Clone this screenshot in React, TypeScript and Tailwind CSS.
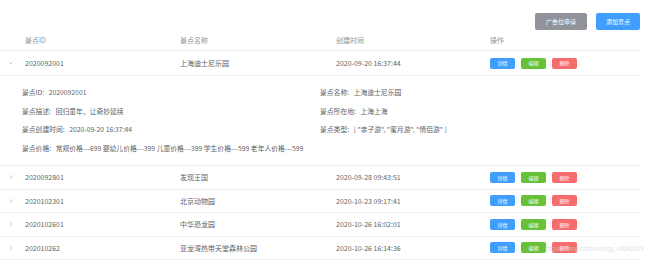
import React from "react";

const rows = [
  { id: "2020092801", name: "发现王国", time: "2020-09-28 09:43:51" },
  { id: "2020102301", name: "北京动物园", time: "2020-10-23 09:17:41" },
  { id: "2020102601", name: "中华恐龙园", time: "2020-10-26 16:02:01" },
  { id: "202010262", name: "亚龙湾热带天堂森林公园", time: "2020-10-26 16:14:36" },
];

function Ops() {
  return (
    <div className="flex items-center gap-[6px]">
      <span className="w-[25px] h-[11px] rounded-[2px] bg-[#409EFF] text-white text-[5px] flex items-center justify-center">详情</span>
      <span className="w-[25px] h-[11px] rounded-[2px] bg-[#67C23A] text-white text-[5px] flex items-center justify-center">编辑</span>
      <span className="w-[25px] h-[11px] rounded-[2px] bg-[#F56C6C] text-white text-[5px] flex items-center justify-center">删除</span>
    </div>
  );
}

function Chevron({ open }: { open?: boolean }) {
  return (
    <svg width="6" height="6" viewBox="0 0 10 10" className="ml-[8px]">
      {open ? (
        <path d="M2 3.5 L5 6.5 L8 3.5" fill="none" stroke="#b0b3b8" strokeWidth="1.2" />
      ) : (
        <path d="M3.5 2 L6.5 5 L3.5 8" fill="none" stroke="#b0b3b8" strokeWidth="1.2" />
      )}
    </svg>
  );
}

const cols = "grid grid-cols-[25px_155px_156px_154px_1fr] items-center";

export default function App() {
  return (
    <div
      className="w-[650px] h-[261px] bg-white relative overflow-hidden text-[#606266]"
      style={{ fontFamily: '"Noto Sans CJK SC", "Noto Sans", sans-serif' }}
    >
      <div className="flex justify-end gap-[9px] pr-[10px] pt-[13px]">
        <span className="w-[52px] h-[17px] rounded-[2px] bg-[#909399] text-white text-[6px] flex items-center justify-center">广告位申请</span>
        <span className="w-[44px] h-[17px] rounded-[2px] bg-[#409EFF] text-white text-[6px] flex items-center justify-center">添加景点</span>
      </div>
      <div className="w-[640px] text-[7px]">
        <div className={`${cols} h-[21px] border-b border-[#EBEEF5] text-[#909399]`}>
          <div />
          <div>景点ID</div>
          <div>景点名称</div>
          <div>创建时间</div>
          <div>操作</div>
        </div>
        <div className={`${cols} h-[25px] border-b border-[#EBEEF5]`}>
          <div className="flex items-center"><Chevron open /></div>
          <div>2020092001</div>
          <div>上海迪士尼乐园</div>
          <div>2020-09-20 16:37:44</div>
          <Ops />
        </div>
        <div className="h-[90px] border-b border-[#EBEEF5] pl-[22px] pt-[11px] grid grid-cols-[298px_1fr] gap-y-[8.5px] content-start text-[6.8px] leading-[10px]">
          <div>景点ID:&nbsp;&nbsp;&nbsp;2020092001</div>
          <div>景点名称:&nbsp;&nbsp;&nbsp;上海迪士尼乐园</div>
          <div>景点描述:&nbsp;&nbsp;&nbsp;回归童年，让奇妙延续</div>
          <div>景点所在地:&nbsp;&nbsp;&nbsp;上海上海</div>
          <div>景点创建时间:&nbsp;&nbsp;&nbsp;2020-09-20 16:37:44</div>
          <div>景点类型:&nbsp;&nbsp;&nbsp;[ "亲子游", "蜜月游", "情侣游" ]</div>
          <div className="col-span-2">景点价格:&nbsp;&nbsp;&nbsp;常规价格---699 婴幼儿价格---399 儿童价格---399 学生价格---599 老年人价格---599</div>
        </div>
        {rows.map((r) => (
          <div key={r.id} className={`${cols} h-[23.5px] border-b border-[#EBEEF5]`}>
            <div className="flex items-center"><Chevron /></div>
            <div>{r.id}</div>
            <div>{r.name}</div>
            <div>{r.time}</div>
            <Ops />
          </div>
        ))}
      </div>
      <div className="absolute left-[545px] top-[244px] text-[6px] text-[#d0d0d0] opacity-70">
        https://blog.csdn.net/qq_44042019
      </div>
    </div>
  );
}
